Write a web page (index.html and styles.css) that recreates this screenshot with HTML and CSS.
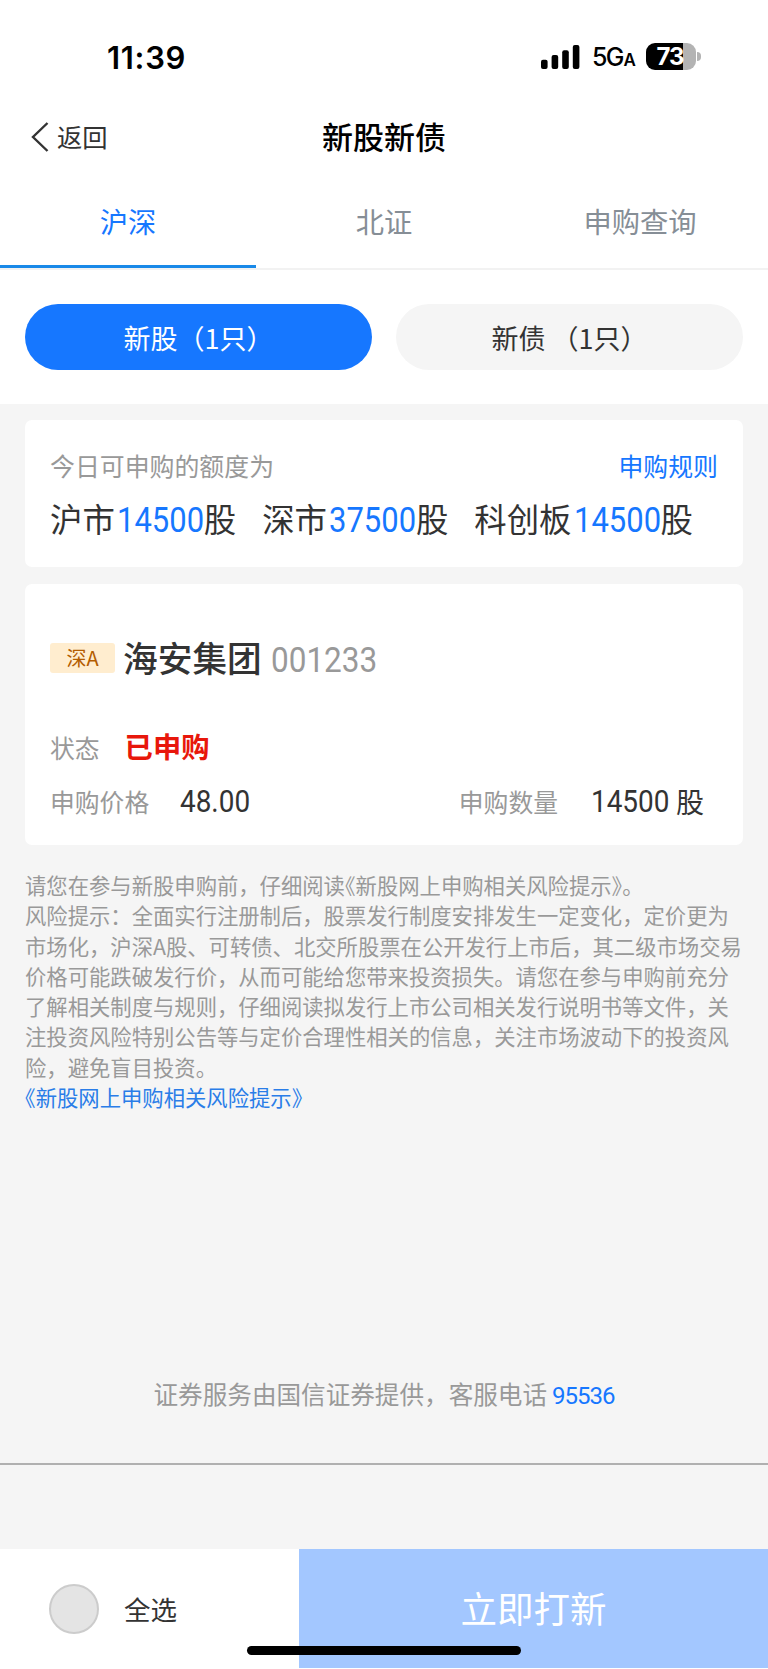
FILE: index.html
```
<!DOCTYPE html>
<html lang="zh-CN">
<head>
    <meta charset="UTF-8">
    <meta name="viewport" content="width=device-width, initial-scale=1.0">
    <title>新股新债</title>
    <link rel="stylesheet" href="styles.css">
</head>
<body>
  <div class="status-bar">
    <span class="time">11:39</span>
    <div class="status-icons">
      <svg class="signal" width="39" height="24" viewBox="0 0 39 24">
        <rect x="0" y="14.7" width="6.6" height="9.3" rx="2"/>
        <rect x="10.6" y="10" width="6.6" height="14" rx="2"/>
        <rect x="21.2" y="5.3" width="6.6" height="18.7" rx="2"/>
        <rect x="31.8" y="0" width="6.6" height="24" rx="2"/>
      </svg>
      <span class="network">5G<small>A</small></span>
      <div class="battery">
        <div class="battery-body">73</div>
        <div class="battery-tip"></div>
      </div>
    </div>
  </div>

  <header>
    <a class="back" href="#">
      <svg width="18" height="30" viewBox="0 0 18 30">
        <path d="M16.5 1 L2 15 L16.5 29" fill="none" stroke="#333" stroke-width="2.4"/>
      </svg>
      <span>返回</span>
    </a>
    <h1>新股新债</h1>
  </header>

  <nav>
    <a class="active" href="#">沪深</a>
    <a href="#">北证</a>
    <a href="#">申购查询</a>
  </nav>

  <div class="switcher">
    <button class="primary">新股（1只）</button>
    <button class="secondary">新债 （1只）</button>
  </div>

  <main>
    <!-- 可申购额度 -->
    <section class="card quota">
      <div class="quota-head">
        <span>今日可申购的额度为</span>
        <a href="#">申购规则</a>
      </div>
      <div class="quota-list">
        <span>沪市<b>14500</b>股</span>
        <span>深市<b>37500</b>股</span>
        <span>科创板<b>14500</b>股</span>
      </div>
    </section>

    <!-- 新股信息 -->
    <section class="card stock">
      <div class="stock-name">
        <span class="tag">深A</span>
        <h2>海安集团</h2>
        <span class="code">001233</span>
      </div>
      <div class="row state-row">
        <span class="label">状态</span>
        <span class="state">已申购</span>
      </div>
      <div class="row">
        <span class="label">申购价格</span>
        <span class="value price">48.00</span>
        <span class="label amount-label">申购数量</span>
        <span class="value amount">14500</span>
        <span class="unit">股</span>
      </div>
    </section>

    <div class="notice">
      <p>请您在参与新股申购前，仔细阅读<span class="half">《</span>新股网上申购相关风险提示<span class="half">》</span>。</p>
      <p>风险提示：全面实行注册制后，股票发行制度安排发生一定变化，定价更为<br>市场化，沪深A股、可转债、北交所股票在公开发行上市后，其二级市场交易<br>价格可能跌破发行价，从而可能给您带来投资损失。请您在参与申购前充分<br>了解相关制度与规则，仔细阅读拟发行上市公司相关发行说明书等文件，关<br>注投资风险特别公告等与定价合理性相关的信息，关注市场波动下的投资风<br>险，避免盲目投资。</p>
      <a href="#"><span class="half">《</span>新股网上申购相关风险提示<span class="half">》</span></a>
    </div>

    <p class="service">证券服务由国信证券提供，客服电话<a href="#">95536</a></p>
  </main>

  <footer>
    <label class="select-all"><span class="circle"></span><span>全选</span></label>
    <button class="submit">立即打新</button>
    <div class="home-indicator"></div>
  </footer>
</body>
</html>
```
FILE: styles.css
```
* { margin: 0; padding: 0; box-sizing: border-box; }

body {
    width: 768px;
    height: 1669px;
    font-family: "Noto Sans CJK SC", sans-serif;
    background-color: #ffffff;
    color: #333;
    overflow: hidden;
    display: flex;
    flex-direction: column;
}

a { text-decoration: none; color: #1677ff; }

button { border: none; font-family: inherit; }

/* 状态栏 */
.status-bar {
    height: 108px;
    padding: 7px 67px 0 107px;
    display: flex;
    justify-content: space-between;
    align-items: center;
    font-family: Inter, sans-serif;
    color: #000;
}

.time {
    font-size: 31px;
    font-weight: 600;
    line-height: 40px;
    letter-spacing: 0.7px;
}

.status-icons {
    display: flex;
    align-items: center;
    padding-bottom: 2px;
}

.network {
    width: 54px;
    margin-left: 12px;
    font-size: 25px;
    font-weight: 500;
    line-height: 28px;
    letter-spacing: -1.8px;
    padding-top: 3px;
}

.network small {
    font-size: 17px;
    font-weight: 600;
    margin-left: 1px;
}

.battery {
    display: flex;
    align-items: center;
    gap: 1px;
}

.battery-body {
    width: 50px;
    height: 27px;
    border-radius: 9px;
    background: linear-gradient(to right, #000 73%, #b3b3b3 73%);
    color: #fff;
    font-size: 24px;
    font-weight: 700;
    line-height: 27px;
    text-align: center;
    letter-spacing: -1px;
    padding-right: 2px;
}

.battery-tip {
    width: 4px;
    height: 9px;
    background-color: #b3b3b3;
    border-radius: 0 4px 4px 0;
}

/* 标题栏 */
header {
    height: 58px;
    padding: 0 31px;
    display: grid;
    grid-template-columns: 1fr auto 1fr;
    align-items: center;
}

.back {
    display: flex;
    align-items: center;
    gap: 8px;
    font-size: 25.3px;
    line-height: 30px;
    color: #333;
}

.back span { padding-bottom: 2px; }

h1 {
    font-size: 31px;
    font-weight: 500;
    line-height: 40px;
    padding-bottom: 3px;
    color: #000;
}

/* 标签 */
nav {
    height: 104px;
    display: flex;
    border-bottom: 2px solid #f2f2f2;
}

nav a {
    flex: 1;
    height: 102px;
    line-height: 109px;
    text-align: center;
    font-size: 28.3px;
    color: #868e96;
}

nav a.active {
    color: #1677ff;
    border-bottom: 3px solid #1989e8;
}

.switcher {
    height: 134px;
    padding: 34px 25px;
    display: grid;
    grid-template-columns: 1fr 1fr;
    gap: 24px;
}

.switcher button {
    height: 66px;
    border-radius: 33px;
    font-size: 27px;
    line-height: 66px;
    padding-top: 1px;
}

.switcher .primary {
    background-color: #1677ff;
    color: #fff;
}

.switcher .secondary {
    background-color: #f5f5f5;
    color: #333;
}

main {
    flex: 1;
    padding: 16px 25px 0;
    background-color: #f5f5f5;
}

.card {
    background-color: #fff;
    border-radius: 7px;
    padding: 0 25px;
}

/* 额度 */
.quota {
    height: 147px;
    padding-top: 27px;
    margin-bottom: 17px;
}

.quota-head {
    display: flex;
    justify-content: space-between;
    font-size: 24.9px;
    line-height: 36px;
    color: #999;
}

.quota-list {
    display: flex;
    gap: 26px;
    margin-top: 10px;
    font-size: 32.4px;
    line-height: 50px;
    white-space: nowrap;
}

/* 数字横向压窄 */
.quota-list b {
    display: inline-block;
    width: 87px;
    margin-left: 2px;
    font-family: Roboto, sans-serif;
    font-size: 35px;
    font-weight: 400;
    color: #1677ff;
    transform: scaleX(0.885);
    transform-origin: left;
}

/* 股票卡片 */
.stock {
    height: 261px;
    padding-top: 48px;
}

.stock-name {
    display: flex;
    align-items: center;
    height: 52px;
}

.tag {
    width: 65px;
    height: 30px;
    border-radius: 3px;
    background-color: #ffedcf;
    color: #b35c00;
    font-size: 20px;
    line-height: 30px;
    text-align: center;
}

h2 {
    font-size: 34.7px;
    font-weight: 500;
    line-height: 48px;
    margin: 0 9px 0 8px;
    padding-bottom: 3px;
}

.code {
    font-family: Roboto, sans-serif;
    font-size: 35px;
    color: #999;
    padding-top: 5px;
    transform: scaleX(0.9);
    transform-origin: left;
}

.row {
    display: flex;
    align-items: center;
    height: 54px;
}

.state-row { margin-top: 36px; }

.label {
    font-size: 24.8px;
    line-height: 36px;
    color: #999;
}

.state {
    margin-left: 25px;
    padding-bottom: 2px;
    font-size: 28.3px;
    font-weight: 700;
    line-height: 40px;
    color: #e8170b;
}

.value {
    font-family: Roboto, sans-serif;
    font-size: 31px;
    line-height: 40px;
    padding-top: 1px;
    transform: scaleX(0.9);
    transform-origin: left;
}

.price { margin-left: 31px; }

.amount {
    width: 77px;
    margin-left: 33px;
}

.amount-label { margin-left: auto; }

.unit {
    margin: 0 14px 0 8px;
    font-size: 28px;
    line-height: 40px;
}

/* 风险提示 */
.notice {
    margin-top: 25px;
    height: 243px;
    font-size: 21.33px;
    line-height: 30.25px;
    color: #999;
    white-space: nowrap;
}

.notice a {
    display: block;
    color: #2a7de8;
}

.half { font-feature-settings: "halt"; }

.service {
    margin: 262px -25px 0;
    height: 90px;
    border-bottom: 2px solid #b0b0b0;
    text-align: center;
    font-size: 24.6px;
    line-height: 36px;
    color: #999;
}

.service a {
    font-family: Roboto, sans-serif;
    font-size: 24px;
    letter-spacing: -1px;
    margin-left: 5px;
}

/* 底部操作栏 */
footer {
    position: relative;
    height: 120px;
    display: flex;
}

.select-all {
    width: 299px;
    padding: 0 0 1px 49px;
    display: flex;
    align-items: center;
    gap: 25px;
    font-size: 26.5px;
    line-height: 40px;
}

.select-all span:last-child { padding-top: 1px; }

.circle {
    width: 50px;
    height: 50px;
    border-radius: 50%;
    border: 2px solid #ccc;
    background-color: #e4e4e4;
}

.submit {
    flex: 1;
    height: 119px;
    background-color: #a3c7ff;
    color: #fff;
    font-size: 36.5px;
    padding-bottom: 3px;
}

.home-indicator {
    position: absolute;
    left: 247px;
    bottom: 14px;
    width: 274px;
    height: 9px;
    border-radius: 5px;
    background-color: #000;
}
```
